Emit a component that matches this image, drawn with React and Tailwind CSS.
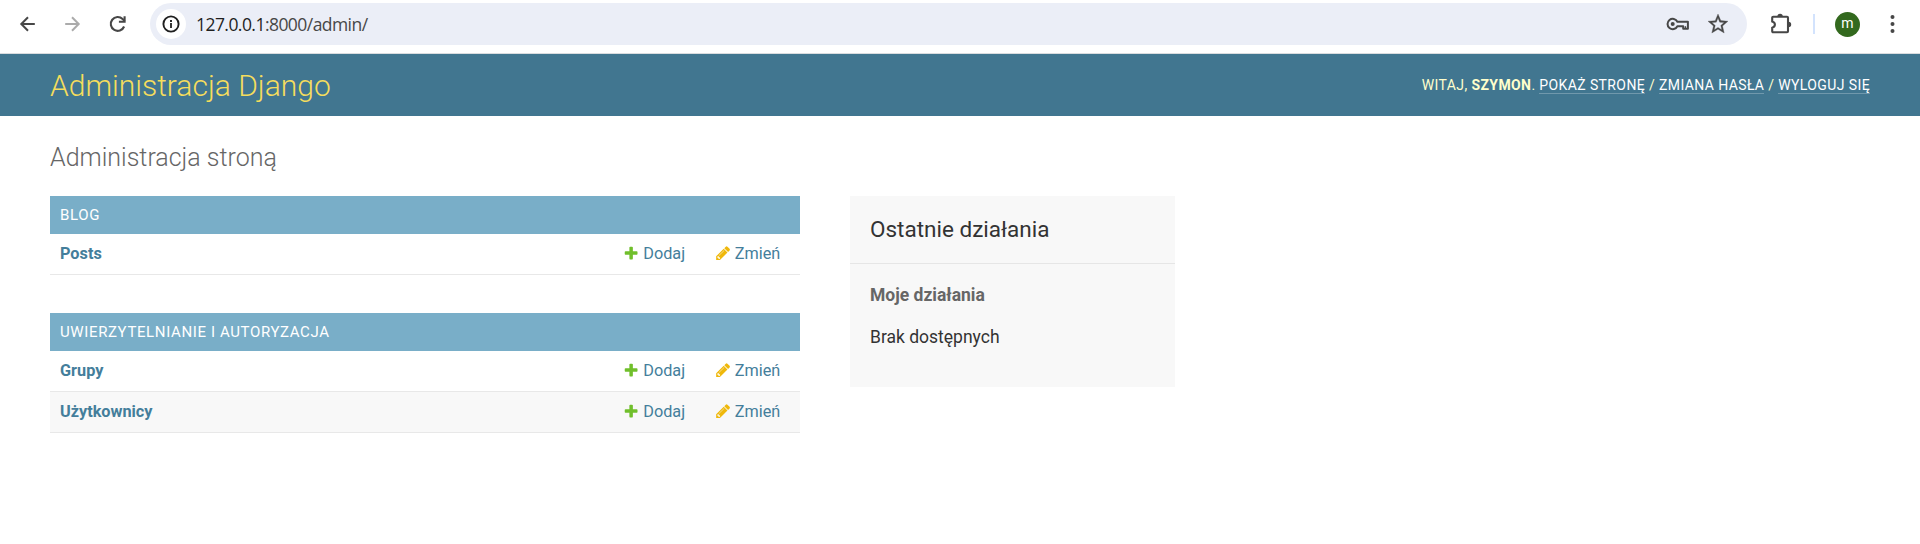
import React from "react";

const ICON = "#474747";

function BackIcon({ color, flip }) {
  return (
    <svg width="20" height="20" viewBox="0 0 20 20" fill="none" stroke={color} strokeWidth="2" className={flip ? "-scale-x-100" : ""}>
      <path d="M17.8 10H4.6M11 3.3 4.3 10l6.7 6.7" />
    </svg>
  );
}

function ReloadIcon() {
  return (
    <svg width="20" height="20" viewBox="0 0 20 20" fill="none" stroke={ICON} strokeWidth="2.1">
      <path d="M16.1 12.5A6.9 6.9 0 1 1 14.6 5.1L16.7 7.1" />
      <path d="M16.6 2.2V7.8H10.9" />
    </svg>
  );
}

function InfoIcon() {
  return (
    <svg width="18" height="18" viewBox="0 0 18 18" fill="none" stroke="#1f1f1f">
      <circle cx="9" cy="9" r="7.6" strokeWidth="1.9" />
      <path d="M9 8v5" strokeWidth="1.8" />
      <path d="M9 5v1.9" strokeWidth="1.9" />
    </svg>
  );
}

function KeyIcon() {
  return (
    <svg width="24" height="14" viewBox="0 0 24 14" fill="none" stroke={ICON} strokeWidth="2">
      <path d="M11.4 4.7H21.9V11.8H17.2V9.3H11.4A5.2 5.2 0 1 1 11.4 4.7Z" strokeLinejoin="round" />
      <path d="M19.4 11.8V9.2" strokeWidth="1.4" />
      <circle cx="6.7" cy="7" r="2" fill={ICON} stroke="none" />
    </svg>
  );
}

function StarIcon() {
  return (
    <svg width="24" height="24" viewBox="0 0 24 24" fill={ICON} stroke={ICON} strokeWidth="0.3">
      <path d="M22 9.24l-7.19-.62L12 2 9.19 8.63 2 9.24l5.46 4.73L5.82 21 12 17.27 18.18 21l-1.63-7.03L22 9.24zM12 15.4l-3.76 2.27 1-4.28-3.32-2.88 4.38-.38L12 6.1l1.71 4.04 4.38.38-3.32 2.88 1 4.28L12 15.4z" />
    </svg>
  );
}

function ExtensionIcon() {
  return (
    <svg width="22" height="22" viewBox="0 0 22 22">
      <path
        d="M3.2 3.7H17Q18 3.7 18 4.7V18.3Q18 19.3 17 19.3H3.2Q2.2 19.3 2.2 18.3V14.7Q4.9 14 4.9 11.6T2.2 8.4V4.7Q2.2 3.7 3.2 3.7Z"
        fill="none"
        stroke={ICON}
        strokeWidth="2.1"
      />
      <path d="M7.4 3.5a2.7 2.7 0 0 1 5.4 0ZM18.5 8.8a2.7 2.7 0 0 1 0 5.4Z" fill={ICON} />
    </svg>
  );
}

function AddIcon() {
  return (
    <svg className="size-[16.25px] shrink-0" viewBox="0 0 1792 1792" fill="#70bf2b">
      <path d="M1600 796v192q0 40-28 68t-68 28h-416v416q0 40-28 68t-68 28h-192q-40 0-68-28t-28-68v-416h-416q-40 0-68-28t-28-68v-192q0-40 28-68t68-28h416v-416q0-40 28-68t68-28h192q40 0 68 28t28 68v416h416q40 0 68 28t28 68z" />
    </svg>
  );
}

function ChangeIcon() {
  return (
    <svg className="size-[16.25px] shrink-0" viewBox="0 0 1792 1792" fill="#efb80b">
      <path d="M491 1536l91-91-235-235-91 91v107h128v128h107zm523-928q0-22-22-22-10 0-17 7l-542 542q-7 7-7 17 0 22 22 22 10 0 17-7l542-542q7-7 7-17zm-54-192l416 416-832 832h-416v-416zm683 96q0 53-37 90l-166 166-416-416 166-165q36-38 90-38 53 0 91 38l235 234q37 39 37 91z" />
    </svg>
  );
}

function BrowserBar() {
  return (
    <div className="flex h-[54px] items-start border-b border-[#d9dcdf] bg-white pt-[3px]">
      <div className="flex h-[42px] w-[150px] shrink-0 items-center pl-[17px]">
        <BackIcon color={ICON} />
        <div className="w-[26px]" />
        <BackIcon color="#ababab" flip />
        <div className="w-[25px]" />
        <ReloadIcon />
      </div>
      <div className="flex h-[42px] w-[1597px] shrink-0 items-center rounded-full bg-[#ebeef7] pl-[6px] pr-[17px]">
        <div className="flex size-[30px] items-center justify-center rounded-full bg-white">
          <InfoIcon />
        </div>
        <div className="ml-[10px] flex-1 pt-px font-['Open_Sans',sans-serif] text-[17.5px] font-normal tracking-[-0.55px] text-[#474747]">
          <span className="text-[#1f1f1f]">127.0.0.1</span>:8000/admin/
        </div>
        <KeyIcon />
        <div className="w-4" />
        <StarIcon />
      </div>
      <div className="flex h-[42px] flex-1 items-center pl-[23px]">
        <ExtensionIcon />
        <div className="ml-[21px] h-5 w-[2px] bg-[#d3e3fd]" />
        <div className="ml-5 flex size-[25px] items-center justify-center rounded-full bg-[#33691e] pb-[2px] font-['Roboto',sans-serif] text-[14px] leading-none text-white">
          m
        </div>
        <svg className="ml-[30px]" width="5" height="20" viewBox="0 0 5 20" fill={ICON}>
          <circle cx="2.5" cy="3" r="2" />
          <circle cx="2.5" cy="10" r="2" />
          <circle cx="2.5" cy="17" r="2" />
        </svg>
      </div>
    </div>
  );
}

function UserLink({ children }) {
  return <a className="border-b border-white/25 text-white">{children}</a>;
}

function Row({ name, shaded }) {
  return (
    <div className={`flex h-[41px] items-center border-b border-[#e8e8e8] pl-[10px] text-[16.25px] text-[#447e9b] ${shaded ? "bg-[#f8f8f8]" : "bg-white"}`}>
      <a className="flex-1 font-bold">{name}</a>
      <a className="flex w-[91px] items-center gap-[4px]">
        <span className="pb-[2px]"><AddIcon /></span>
        Dodaj
      </a>
      <a className="flex w-[86px] items-center gap-[4px] pl-[0.5px]">
        <span className="pb-[2px]"><ChangeIcon /></span>
        Zmień
      </a>
    </div>
  );
}

function AppModule({ title, models }) {
  return (
    <section>
      <h2 className="flex h-[38px] items-center bg-[#79aec8] pl-[10px] text-[15px] font-normal tracking-[0.625px] text-white uppercase">
        {title}
      </h2>
      {models.map((m, i) => (
        <Row key={m} name={m} shaded={i % 2 === 1} />
      ))}
    </section>
  );
}

export default function App() {
  return (
    <div className="h-[544px] w-full overflow-hidden bg-white font-['Roboto',sans-serif] text-[#333]">
      <BrowserBar />
      <header className="flex h-[62px] items-center justify-between bg-[#417690] px-[50px]">
        <h1 className="text-[30px] font-light text-[#f5dd5d]">Administracja Django</h1>
        <div className="text-[14px] leading-[17px] font-normal tracking-[0.39px] text-[#ffc] uppercase">
          Witaj, <strong className="font-bold">Szymon</strong>. <UserLink>Pokaż stronę</UserLink> / <UserLink>Zmiana hasła</UserLink> / <UserLink>Wyloguj się</UserLink>
        </div>
      </header>
      <main className="px-[50px] pt-[25px]">
        <h1 className="h-[55px] pt-px text-[25px] leading-[31px] font-light text-[#666]">Administracja stroną</h1>
        <div className="flex items-start gap-[50px]">
          <div className="flex w-[750px] flex-col gap-[38px]">
            <AppModule title="Blog" models={["Posts"]} />
            <AppModule title="Uwierzytelnianie i autoryzacja" models={["Grupy", "Użytkownicy"]} />
          </div>
          <aside className="h-[191px] w-[325px] bg-[#f8f8f8]">
            <h2 className="flex h-[68px] items-center border-b border-[#e6e6e6] px-5 text-[22.5px] font-normal">Ostatnie działania</h2>
            <h3 className="mt-5 px-5 text-[17.5px] leading-[22px] font-bold text-[#666]">Moje działania</h3>
            <p className="mt-5 px-5 text-[17.5px] leading-[22px]">Brak dostępnych</p>
          </aside>
        </div>
      </main>
    </div>
  );
}
